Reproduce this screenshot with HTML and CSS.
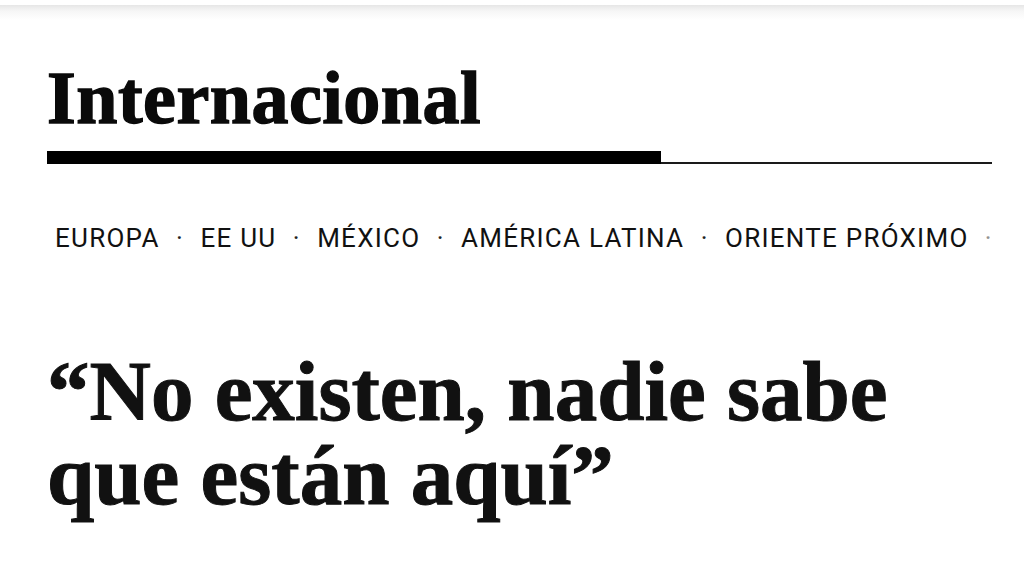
FILE: index.html
```html
<!DOCTYPE html>
<html lang="es">
<head>
<meta charset="utf-8">
<title>Internacional</title>
<link rel="stylesheet" href="styles.css">
</head>
<body>
<div class="topshadow"></div>
<main class="page">
  <header class="section-head">
    <h1 class="section-title">Internacional</h1>
    <div class="rule">
      <span class="rule-thick"></span>
      <span class="rule-thin"></span>
    </div>
    <nav class="subnav">
      <ul class="subnav-list">
        <li class="subnav-item">EUROPA</li>
        <li class="subnav-sep">·</li>
        <li class="subnav-item">EE UU</li>
        <li class="subnav-sep">·</li>
        <li class="subnav-item">MÉXICO</li>
        <li class="subnav-sep">·</li>
        <li class="subnav-item">AMÉRICA LATINA</li>
        <li class="subnav-sep">·</li>
        <li class="subnav-item">ORIENTE PRÓXIMO</li>
        <li class="subnav-sep">·</li>
      </ul>
      <div class="subnav-fade"></div>
    </nav>
  </header>
  <article class="story">
    <h2 class="headline">“No existen, nadie sabe que están aquí”</h2>
  </article>
</main>
</body>
</html>
```
FILE: styles.css
```css
html, body {
  margin: 0;
  padding: 0;
  background: #fff;
}

body {
  width: 1024px;
  height: 586px;
  overflow: hidden;
  color: #111;
}

.topshadow {
  height: 20px;
  background: linear-gradient(#fff 0, #fff 5px, #e6e6e6 5px, #f6f6f6 11px, #fff 20px);
}

.page {
  padding: 0 32px 0 47px;
}

.section-title {
  margin: 41px 0 0 0;
  font-family: "Liberation Serif", "Times New Roman", serif;
  font-weight: 700;
  font-size: 74px;
  line-height: 74px;
  letter-spacing: 0.5px;
  -webkit-text-stroke: 1.4px #0a0a0a;
  color: #0a0a0a;
}

.rule {
  display: flex;
  align-items: flex-end;
  height: 13px;
  margin-top: 16px;
}

.rule-thick {
  width: 614px;
  height: 13px;
  background: #000;
}

.rule-thin {
  flex: 1;
  height: 2px;
  background: #1a1a1a;
}

.subnav {
  position: relative;
  margin-top: 59px;
  margin-left: 8px;
  margin-right: -32px;
  overflow: hidden;
}

.subnav-list {
  list-style: none;
  margin: 0;
  padding: 0;
  display: flex;
  white-space: nowrap;
  font-family: Roboto, "Liberation Sans", sans-serif;
  font-size: 26px;
  line-height: 30px;
  color: #111;
}

.subnav-item {
  letter-spacing: 1.25px;
  margin-right: -1.25px;
}

.subnav-sep {
  width: 42px;
  text-align: center;
  color: #222;
}

.subnav-fade {
  position: absolute;
  top: 0;
  right: 0;
  width: 56px;
  height: 100%;
  background: linear-gradient(to right, rgba(255,255,255,0) 0, rgba(255,255,255,0.85) 60%, #fff 100%);
}

.story {
  margin-top: 96px;
}

.headline {
  margin: 0;
  width: 900px;
  font-family: "Liberation Serif", "Times New Roman", serif;
  font-weight: 700;
  font-size: 85px;
  line-height: 84px;
  letter-spacing: 0;
  -webkit-text-stroke: 1px #111;
  color: #111;
}
```
